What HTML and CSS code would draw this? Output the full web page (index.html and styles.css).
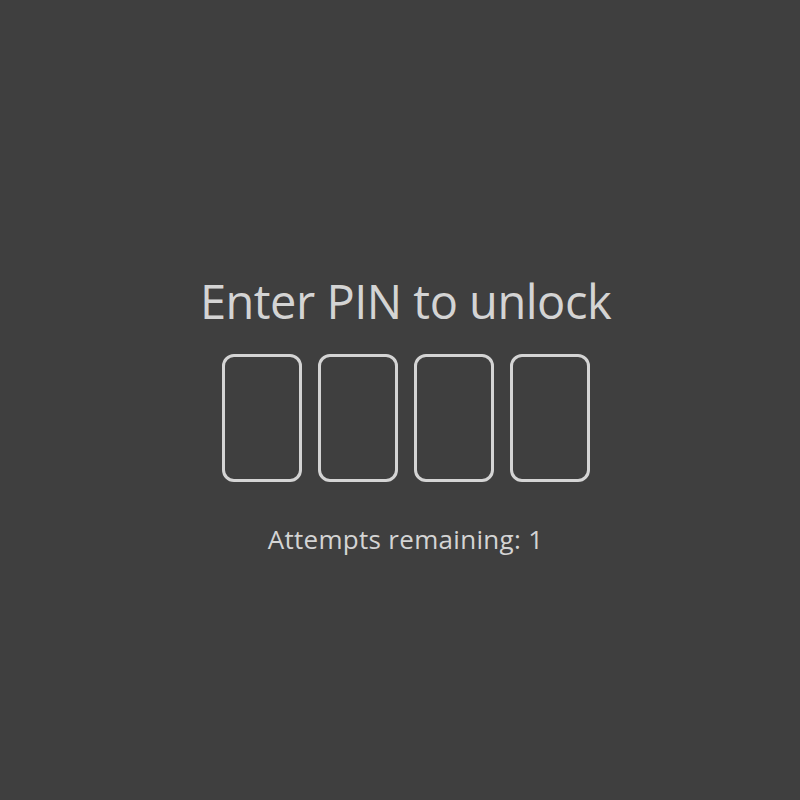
FILE: index.html
```html
<!DOCTYPE html>
<html lang="en">
<head>
<meta charset="utf-8">
<title>Enter PIN</title>
<link rel="stylesheet" href="styles.css">
</head>
<body>
<main class="lock">
  <h1 class="lock-title">Enter PIN to unlock</h1>
  <div class="pin-row">
    <div class="pin-box"></div>
    <div class="pin-box"></div>
    <div class="pin-box"></div>
    <div class="pin-box"></div>
  </div>
  <p class="attempts">Attempts remaining: 1</p>
</main>
</body>
</html>
```

FILE: styles.css
```css
html, body {
  margin: 0;
  padding: 0;
  background: #3f3f3f;
  height: 100%;
}
body {
  font-family: "Open Sans", "Noto Sans", sans-serif;
  color: #d4d4d4;
}
.lock {
  display: flex;
  flex-direction: column;
  align-items: center;
  padding-top: 273px;
  padding-left: 11px;
}
.lock-title {
  margin: 0;
  font-size: 47px;
  font-weight: 400;
  line-height: 56px;
  letter-spacing: -0.5px;
}
.pin-row {
  display: flex;
  gap: 16px;
  margin-top: 25px;
}
.pin-box {
  width: 80px;
  height: 128px;
  box-sizing: border-box;
  border: 3px solid #d4d4d4;
  border-radius: 12px;
}
.attempts {
  margin: 42px 0 0;
  font-size: 26px;
  line-height: 31px;
  letter-spacing: 0.3px;
}
```
